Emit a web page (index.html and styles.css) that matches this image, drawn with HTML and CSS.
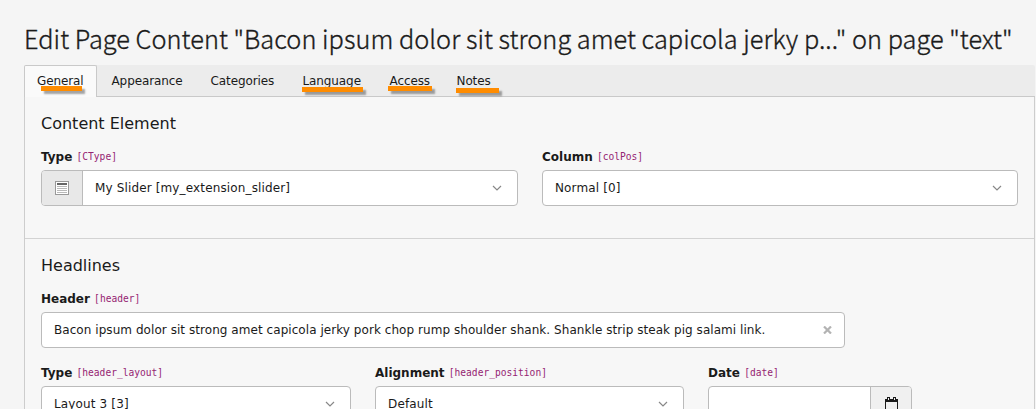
FILE: index.html
```html
<!DOCTYPE html>
<html lang="en">
<head>
<meta charset="utf-8">
<title>Edit Page Content</title>
<link rel="stylesheet" href="styles.css">
</head>
<body>
<h1 class="title">Edit Page Content "Bacon ipsum dolor sit strong amet capicola jerky p..." on page "text"</h1>
<nav class="tabs">
  <a class="tab tab-active"><span class="tab-text">General</span><i class="mark mark-general"></i></a>
  <a class="tab tab-appearance"><span class="tab-text">Appearance</span></a>
  <a class="tab tab-categories"><span class="tab-text">Categories</span></a>
  <a class="tab tab-language"><span class="tab-text">Language</span><i class="mark mark-language"></i></a>
  <a class="tab tab-access"><span class="tab-text">Access</span><i class="mark mark-access"></i></a>
  <a class="tab tab-notes"><span class="tab-text">Notes</span><i class="mark mark-notes"></i></a>
</nav>
<main class="panel">
  <section class="section section-content">
    <h2 class="heading">Content Element</h2>
    <div class="row row-halves">
      <div class="field">
        <label class="label">Type <code class="code">[CType]</code></label>
        <div class="control">
          <span class="addon">
            <svg width="14" height="14" viewBox="0 0 14 14" shape-rendering="crispEdges"><path fill="#fff" stroke="#999" d="M.5.5h13v13H.5z"/><path fill="#666" d="M2 2h10v2H2z"/><path fill="#b9b9b9" d="M2 5h10v1H2zM2 7h10v1H2zM2 9h10v1H2zM2 11h10v1H2z"/></svg>
          </span>
          <span class="value">My Slider [my_extension_slider]</span>
          <svg class="chevron" width="10" height="6" viewBox="0 0 10 6"><path d="M1 1l4 4 4-4"/></svg>
        </div>
      </div>
      <div class="field">
        <label class="label">Column <code class="code">[colPos]</code></label>
        <div class="control">
          <span class="value">Normal [0]</span>
          <svg class="chevron" width="10" height="6" viewBox="0 0 10 6"><path d="M1 1l4 4 4-4"/></svg>
        </div>
      </div>
    </div>
  </section>
  <section class="section">
    <h2 class="heading">Headlines</h2>
    <div class="field field-header">
      <label class="label">Header <code class="code">[header]</code></label>
      <div class="control">
        <span class="value value-header">Bacon ipsum dolor sit strong amet capicola jerky pork chop rump shoulder shank. Shankle strip steak pig salami link.</span>
        <svg class="clear" width="9" height="8" viewBox="0 0 9 8"><path d="M1 .5l7 7M8 .5l-7 7"/></svg>
      </div>
    </div>
    <div class="row row-thirds">
      <div class="field">
        <label class="label">Type <code class="code">[header_layout]</code></label>
        <div class="control">
          <span class="value">Layout 3 [3]</span>
          <svg class="chevron" width="10" height="6" viewBox="0 0 10 6"><path d="M1 1l4 4 4-4"/></svg>
        </div>
      </div>
      <div class="field">
        <label class="label">Alignment <code class="code">[header_position]</code></label>
        <div class="control">
          <span class="value">Default</span>
          <svg class="chevron" width="10" height="6" viewBox="0 0 10 6"><path d="M1 1l4 4 4-4"/></svg>
        </div>
      </div>
      <div class="field field-date">
        <label class="label">Date <code class="code">[date]</code></label>
        <div class="control">
          <span class="value"></span>
          <span class="addon addon-date">
            <svg width="13" height="15" viewBox="0 0 13 15" shape-rendering="crispEdges"><path fill="#1a1a1a" fill-rule="evenodd" d="M0 2h2V0h3v2h3V0h3v2h2v13H0zM1 5v9h11V5zM3 1v2h1V1zM9 1v2h1V1z"/></svg>
          </span>
        </div>
      </div>
    </div>
  </section>
</main>
</body>
</html>
```

FILE: styles.css
```css
* { box-sizing: border-box; }
html { overflow: hidden; }
body {
  margin: 0;
  height: 409px;
  overflow: hidden;
  padding: 19px 1px 0 24px;
  background: #f5f5f5;
  color: #1a1a1a;
  font: 12px/18px "DejaVu Sans", sans-serif;
  letter-spacing: -0.1px;
}
.title {
  margin: 0;
  height: 46px;
  font: 300 25.3px/38px "Noto Sans CJK JP", sans-serif;
  letter-spacing: 0.045px;
  -webkit-text-stroke: 0.35px #1a1a1a;
  white-space: nowrap;
}
.tabs {
  display: flex;
  height: 32px;
  background: #ececec;
  border-bottom: 1px solid #c9c9c9;
  border-radius: 2px 2px 0 0;
}
.tab {
  position: relative;
  height: 32px;
  padding: 7px 0 0 14.5px;
  white-space: nowrap;
}
.tab-active {
  width: 73px;
  padding: 6px 0 0 12px;
  background: #fafafa;
  border: 1px solid #c9c9c9;
  border-bottom: 0;
  border-radius: 2px 2px 0 0;
}
.tab-appearance { width: 99px; }
.tab-categories { width: 92px; }
.tab-language { width: 87px; }
.tab-access { width: 67px; }
.mark {
  position: absolute;
  height: 5px;
  background: #ff8c00;
  box-shadow: 3px 3px 2px rgba(0, 0, 0, .35);
}
.mark-general { left: 16px; top: 20px; width: 41px; }
.mark-language { left: 14px; top: 22px; width: 61px; }
.mark-access { left: 13px; top: 21px; width: 44px; }
.mark-notes { left: 14px; top: 23px; width: 43px; }
.panel {
  border: 1px solid #cdcdcd;
  border-top: 0;
  background: #f7f7f7;
  height: 330px;
}
.section { padding: 17px 16px 0; }
.section-content { height: 142px; border-bottom: 1px solid #d3d3d3; }
.heading { margin: 0; font-size: 16px; line-height: 20px; font-weight: 400; letter-spacing: 0; }
.row { display: grid; }
.row-halves { grid-template-columns: 477px 476px; gap: 24px; }
.row-thirds { grid-template-columns: 310px 309px 204px; gap: 24px; }
.label {
  display: block;
  height: 36px;
  padding-top: 14px;
  line-height: 18px;
  font-weight: 700;
  letter-spacing: 0;
  white-space: nowrap;
}
.code {
  font: 9.6px/18px "DejaVu Sans Mono", monospace;
  color: #952372;
  vertical-align: top;
}
.control {
  display: flex;
  align-items: center;
  height: 36px;
  border: 1px solid #bbb;
  border-radius: 4px;
  background: #fff;
  overflow: hidden;
}
.field-header { width: 804px; height: 73px; }
.row-thirds .label, .row-thirds .code { letter-spacing: 0; }
.row-thirds .label { height: 37px; padding-top: 15px; }
.value { flex: 1; padding-left: 12px; letter-spacing: 0.14px; white-space: nowrap; }
.value-header { letter-spacing: 0.055px; }
.addon {
  display: flex;
  align-items: center;
  justify-content: center;
  width: 41px;
  height: 34px;
  background: #e8e8e8;
  border-right: 1px solid #bbb;
}
.addon-date { background: #f0f0f0; border-right: 0; border-left: 1px solid #bbb; }
.chevron { margin-right: 15px; fill: none; stroke: #888; stroke-width: 1.2; }
.clear { margin-right: 12px; fill: none; stroke: #b3b3b3; stroke-width: 2.2; }
```
